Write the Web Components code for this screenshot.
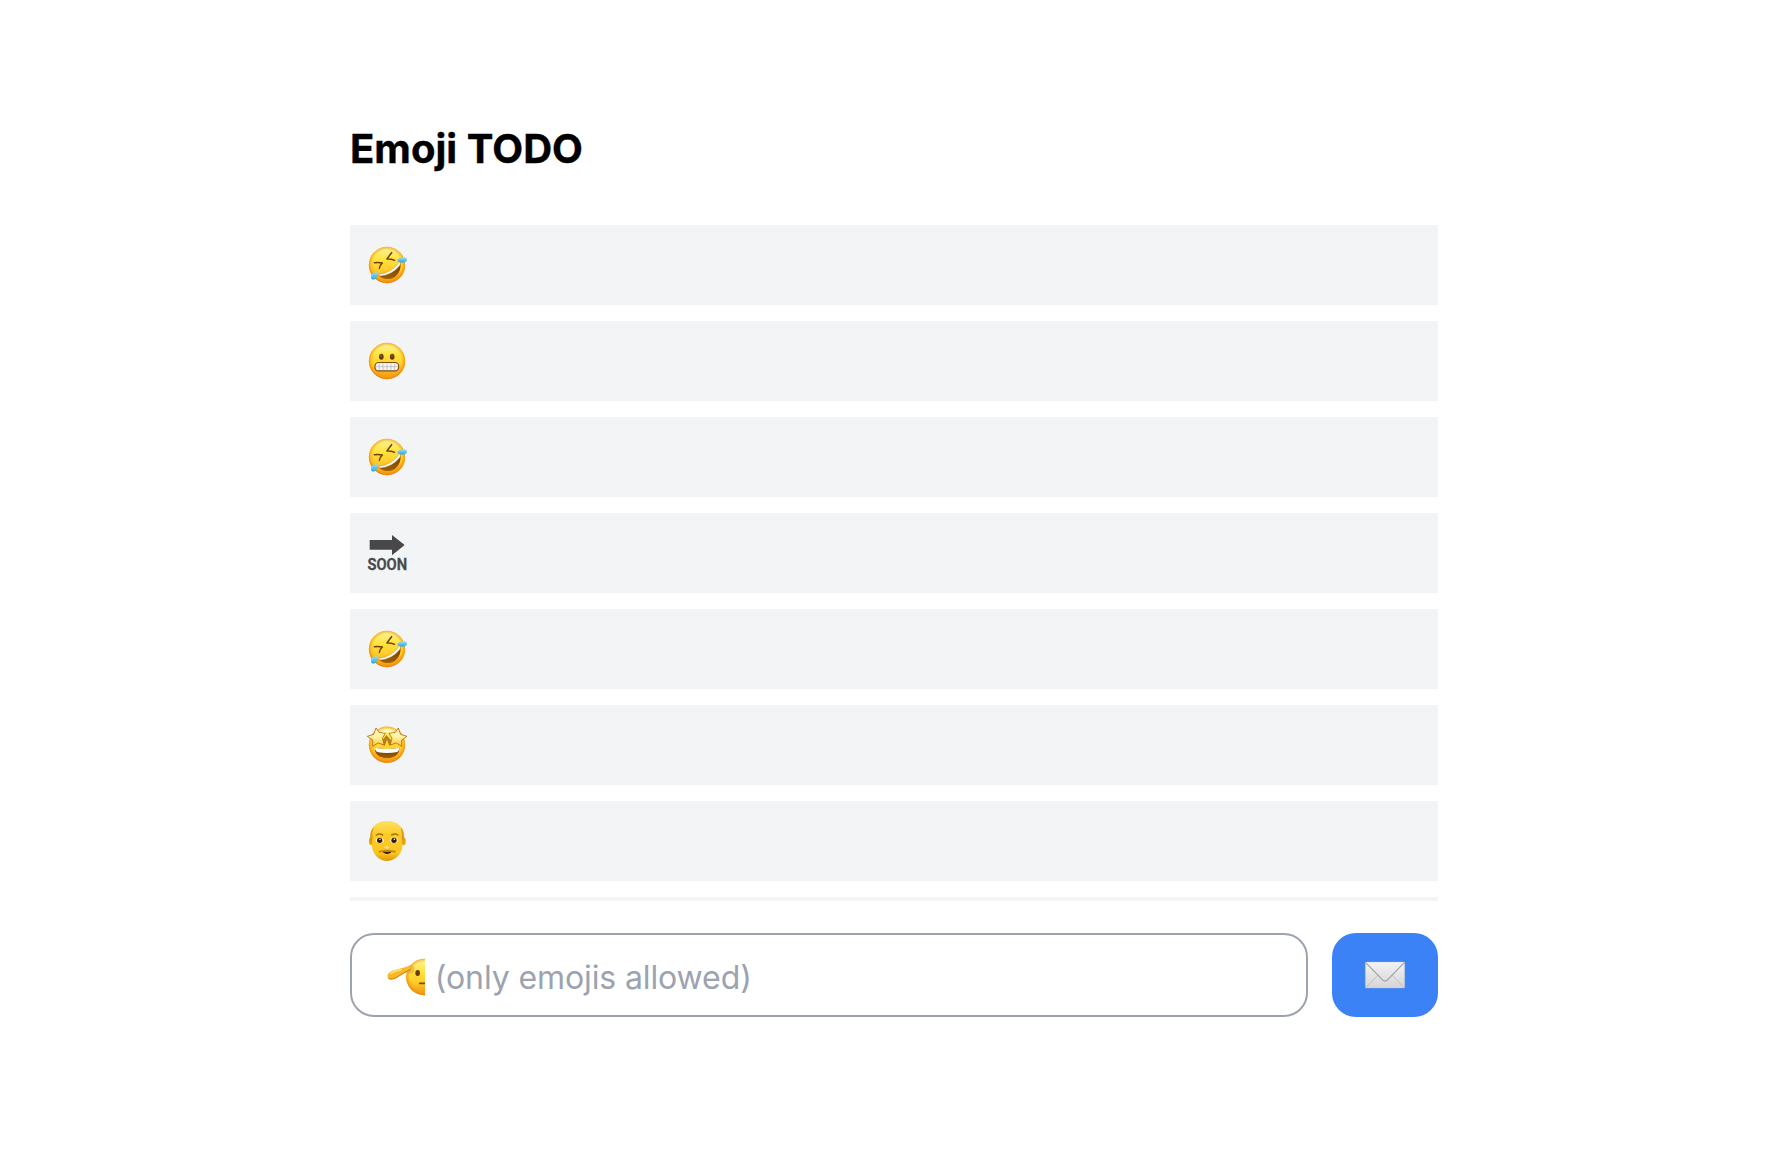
<!DOCTYPE html>
<html lang="en">
<head>
<meta charset="utf-8">
<title>Emoji TODO</title>
<style>
html,body{margin:0;height:100%;background:#fff}
body{font-family:Inter,"Open Sans",sans-serif;color:#000;overflow:hidden}
</style>
</head>
<body>
<todo-app>
  <todo-heading slot="title">Emoji TODO</todo-heading>
  <todo-item><emoji-icon name="rofl"></emoji-icon></todo-item>
  <todo-item><emoji-icon name="grimace"></emoji-icon></todo-item>
  <todo-item><emoji-icon name="rofl"></emoji-icon></todo-item>
  <todo-item><emoji-icon name="soon"></emoji-icon></todo-item>
  <todo-item><emoji-icon name="rofl"></emoji-icon></todo-item>
  <todo-item><emoji-icon name="starstruck"></emoji-icon></todo-item>
  <todo-item><emoji-icon name="elder"></emoji-icon></todo-item>
  <todo-item></todo-item>
  <emoji-field slot="form"><emoji-icon slot="lead" name="salute"></emoji-icon>(only emojis allowed)</emoji-field>
  <send-button slot="form"><emoji-icon name="envelope"></emoji-icon></send-button>
</todo-app>
<script>
const define = (tag, html) => customElements.define(tag, class extends HTMLElement {
  constructor(){ super(); this.attachShadow({mode:'open'}).innerHTML = html; }
});

define('todo-app', `<style>
:host{display:flex;flex-direction:column;box-sizing:border-box;width:1088px;margin:0 auto;padding-top:125px;transform:translateX(4px)}
.list{display:flex;flex-direction:column;gap:16px;height:676px;margin-top:52px;overflow:hidden}
.form{display:flex;gap:24px;margin-top:32px;height:84px}
</style><slot name="title"></slot><div class="list"><slot></slot></div><div class="form"><slot name="form"></slot></div>`);

define('todo-heading', `<style>
:host{display:block;height:48px}
h1{margin:0;font-size:40px;line-height:48px;font-weight:700;letter-spacing:.05px;-webkit-text-stroke:.4px #000;white-space:nowrap}
</style><h1><slot></slot></h1>`);

define('todo-item', `<style>
:host{display:flex;align-items:center;flex:none;box-sizing:border-box;height:80px;padding:0 17px;background:#f3f4f6}
</style><slot></slot>`);

define('emoji-field', `<style>
:host{display:flex;align-items:center;flex:1;box-sizing:border-box;border:2px solid #9ca3af;border-radius:24px;padding:2px 34px 0 35px}
span{font-size:32px;line-height:48px;letter-spacing:-.11px;color:#9ca3af;margin-left:9.5px;white-space:nowrap;padding-top:4px}
</style><slot name="lead"></slot><span><slot></slot></span>`);

define('send-button', `<style>
:host{display:flex;flex:none;width:106px}
button{all:unset;display:flex;flex:1;align-items:center;justify-content:center;border-radius:24px;background:#3b82f6}
</style><button aria-label="Send"><slot></slot></button>`);

const defs = `<defs>
<linearGradient id="f" x1="0" y1="0" x2="0" y2="1"><stop offset="0" stop-color="#fff6a8"/><stop offset=".3" stop-color="#ffe743"/><stop offset=".65" stop-color="#ffcb28"/><stop offset="1" stop-color="#f0900f"/></linearGradient>
<radialGradient id="e" cx=".5" cy=".48" r=".52"><stop offset=".74" stop-color="#fba617" stop-opacity="0"/><stop offset=".88" stop-color="#f99c12" stop-opacity=".6"/><stop offset="1" stop-color="#e88108"/></radialGradient>
<linearGradient id="m" x1="0" y1="0" x2="0" y2="1"><stop offset="0" stop-color="#6b3500"/><stop offset="1" stop-color="#9b6208"/></linearGradient>
<linearGradient id="t" x1="0" y1="0" x2="0" y2="1"><stop offset="0" stop-color="#8fe1fb"/><stop offset="1" stop-color="#29a4e8"/></linearGradient>
<linearGradient id="s" x1="0" y1="0" x2="0" y2="1"><stop offset="0" stop-color="#fffbd8"/><stop offset=".5" stop-color="#fff0a0"/><stop offset="1" stop-color="#f9c63a"/></linearGradient>
<linearGradient id="h" x1="0" y1="0" x2="0" y2="1"><stop offset="0" stop-color="#ffdf61"/><stop offset=".35" stop-color="#fccb26"/><stop offset=".8" stop-color="#fcc520"/><stop offset="1" stop-color="#df9608"/></linearGradient>
<linearGradient id="v" x1="0" y1="0" x2="0" y2="1"><stop offset="0" stop-color="#f3f3f3"/><stop offset="1" stop-color="#d5d5d5"/></linearGradient>
</defs>`;
const face = (x=60,y=60) => `<circle cx="${x}" cy="${y}" r="54.5" fill="url(#f)"/><circle cx="${x}" cy="${y}" r="54.5" fill="url(#e)"/>`;

const art = {
rofl: face() + `
<g fill="none" stroke="#713c05" stroke-width="4.5" stroke-linejoin="round" stroke-linecap="round"><path d="M22 53Q34 51 46 54Q39 60 37 70"/><path d="M74 23Q65 34 60 42Q71 41 83 46"/></g>
<path d="M35 90Q77 88 99 49C106 73 91 101 65 102Q45 103 35 90Z" fill="url(#m)"/>
<path d="M34 88Q76 84 98 49Q102 54 99 61Q76 90 41 93Q35 93 34 88Z" fill="#fff" stroke="#c87d19" stroke-width="1.5"/>
<path d="M91 45C97 36 117 34 120 42C121 54 102 56 92 49Z" fill="url(#t)"/>
<path d="M32 82C19 80 9 91 13 101C22 110 34 95 34 84Z" fill="url(#t)"/>`,
grimace: face() + `
<g fill="#6b3904"><ellipse cx="43" cy="47" rx="7" ry="9"/><ellipse cx="75.500" cy="47" rx="7" ry="9"/></g>
<g fill="#a26b27"><circle cx="42" cy="44" r="2.500"/><circle cx="74.500" cy="44" r="2.500"/></g>
<rect x="24" y="64.500" width="71" height="25" rx="11" fill="#f6f6f6" stroke="#7d4e10" stroke-width="3.500"/>
<path d="M27 77H93M37 67V88M48 67V88M60 67V88M72 67V88M83 67V88" stroke="#a9a9ae" stroke-width="1.700"/>`,
soon: `<path d="M8 21H75V6L113 36L75 67V50H8Z" fill="#484848"/><text x="1.500" y="111.500" font-family="Roboto,sans-serif" font-size="49" font-weight="600" fill="#484848" stroke="#484848" stroke-width="1" textLength="119" lengthAdjust="spacingAndGlyphs">SOON</text>`,
starstruck: face(60,59) + `
<path d="M24 68Q60 76 97 68C98 86 83 99 61 99C37 99 22 86 24 68Z" fill="url(#m)"/>
<path d="M24 68Q60 75 97 68Q98 77 91 81Q60 87 30 81Q23 77 24 68Z" fill="#fff"/>
<path d="M58 30L40 55L53 62L60 44L67 62L80 55Z" fill="#985507" opacity=".7"/>
<g fill="url(#s)" stroke="#b06b06" stroke-width="2.500" stroke-linejoin="round"><path d="M27 9L36 22L55 25L46 40L52 60L33 54L17 64L17 45L1 34L20 28Z"/><path d="M94 9L85 22L66 25L75 40L69 60L88 54L104 64L104 45L120 34L101 28Z"/></g>
<path d="M40 18Q60 8 81 18L77 22H45Z" fill="#fff7c1"/>`,
elder: `
<ellipse cx="12" cy="61" rx="6" ry="12" fill="#e8a414"/><ellipse cx="110" cy="61" rx="6" ry="12" fill="#e8a414"/>
<path d="M60 0C88 0 108 14 108 40C108 55 107 66 106 77C103 103 80 120 60 120C40 120 18 103 15 77C14 66 13 55 13 40C13 14 32 0 60 0Z" fill="url(#h)"/>
<path d="M20 19C7 31 7 50 14 70L17 49Q15 36 20 19M101 19C114 31 114 50 107 70L104 49Q106 36 101 19" fill="#d28c10" opacity=".8"/>
<path d="M28 42Q37 36 47 42M74 42Q84 36 93 42" fill="none" stroke="#ad7006" stroke-width="4.500" stroke-linecap="round"/>
<ellipse cx="38" cy="58" rx="12" ry="8" fill="#fff6df"/><ellipse cx="81" cy="58" rx="12" ry="8" fill="#fff6df"/>
<circle cx="38" cy="58" r="8" fill="#371b06"/><circle cx="81" cy="58" r="8" fill="#371b06"/><circle cx="39" cy="55" r="2.300" fill="#fff"/><circle cx="82" cy="55" r="2.300" fill="#fff"/>
<ellipse cx="60" cy="80" rx="8" ry="5" fill="#ffe27a"/><path d="M50 83Q60 88 70 83" fill="none" stroke="#dda018" stroke-width="2"/>
<path d="M37 92Q60 87 84 92" fill="none" stroke="#bd820c" stroke-width="5" stroke-linecap="round"/><path d="M49 94H72Q60 102 49 94Z" fill="#301500" stroke="#301500" stroke-width="2"/>`,
salute: face(112,63) + `
<circle cx="70" cy="40" r="13" fill="#e38b35" opacity=".4"/>
<path d="M67 30C50 36 27 39 13 46C2 52 -2 60 5 67C15 73 27 67 35 61C48 53 63 45 73 40Z" fill="#f8b928"/>
<path d="M4 66C14 74 26 67 34 61C48 53 62 45 72 40" fill="none" stroke="#d68b14" stroke-width="3.500"/>
<path d="M11 52Q25 43 42 41" fill="none" stroke="#ffe06a" stroke-width="5" stroke-linecap="round"/>
<ellipse cx="92" cy="51" rx="7" ry="9" fill="#6b3904"/><path d="M98 82H120" stroke="#7b470b" stroke-width="5" stroke-linecap="round"/>`,
envelope: `<rect x="1" y="21" width="118" height="78" rx="3" fill="url(#v)" stroke="#bfc3ca" stroke-width="1"/>
<path d="M3 97L38 61M117 97L82 61" stroke="#bdbdbd" stroke-width="2.500"/>
<path d="M2 23L49 71Q60 86 71 71L118 23" fill="none" stroke="#9fa1a4" stroke-width="3.500"/>`
};

customElements.define('emoji-icon', class extends HTMLElement {
  connectedCallback(){
    const n = this.getAttribute('name'), w = n === 'salute' ? 115 : 120;
    const root = this.attachShadow({mode:'open'});
    root.innerHTML = `<style>:host{display:block;flex:none}svg{display:block;overflow:${n === 'salute' ? 'hidden' : 'visible'}}</style>
<svg width="${w/3}" height="40" viewBox="0 0 ${w} 120">${defs}${art[n]}</svg>`;
  }
});
</script>
</body>
</html>
